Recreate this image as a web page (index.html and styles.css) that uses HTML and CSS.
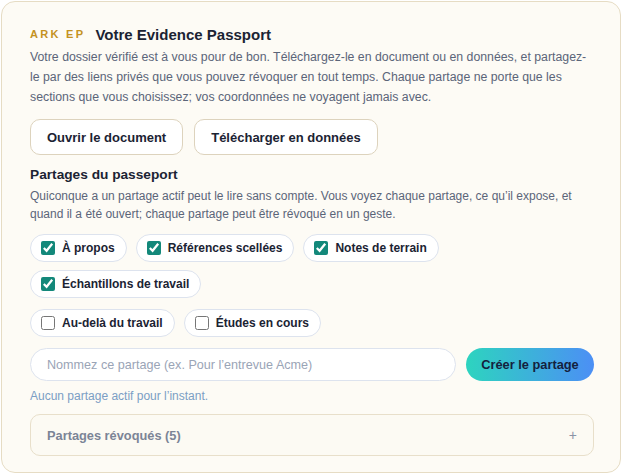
FILE: index.html
```html
<!DOCTYPE html>
<html lang="fr">
<head>
<meta charset="utf-8">
<link rel="stylesheet" href="styles.css">
</head>
<body>
<section class="card">
  <header class="head">
    <span class="eyebrow">ARK EP</span>
    <h1 class="title">Votre Evidence Passport</h1>
  </header>
  <p class="lead">Votre dossier vérifié est à vous pour de bon. Téléchargez-le en document ou en données, et partagez-le par des liens privés que vous pouvez révoquer en tout temps. Chaque partage ne porte que les sections que vous choisissez; vos coordonnées ne voyagent jamais avec.</p>
  <div class="actions">
    <button class="btn">Ouvrir le document</button>
    <button class="btn">Télécharger en données</button>
  </div>
  <h2 class="subtitle">Partages du passeport</h2>
  <p class="desc">Quiconque a un partage actif peut le lire sans compte. Vous voyez chaque partage, ce qu’il expose, et quand il a été ouvert; chaque partage peut être révoqué en un geste.</p>
  <div class="chips">
    <label class="chip"><input type="checkbox" checked><span>À propos</span></label>
    <label class="chip"><input type="checkbox" checked><span>Références scellées</span></label>
    <label class="chip"><input type="checkbox" checked><span>Notes de terrain</span></label>
    <label class="chip"><input type="checkbox" checked><span>Échantillons de travail</span></label>
  </div>
  <div class="chips chips-extra">
    <label class="chip"><input type="checkbox"><span>Au-delà du travail</span></label>
    <label class="chip"><input type="checkbox"><span>Études en cours</span></label>
  </div>
  <div class="create">
    <input class="name" type="text" placeholder="Nommez ce partage (ex. Pour l’entrevue Acme)">
    <button class="primary">Créer le partage</button>
  </div>
  <p class="empty">Aucun partage actif pour l’instant.</p>
  <div class="revoked">
    <span>Partages révoqués (5)</span>
    <span class="plus">+</span>
  </div>
</section>
</body>
</html>
```
FILE: styles.css
```css
* { box-sizing: border-box; }
body {
  margin: 0;
  background: #ffffff;
  font-family: "Liberation Sans", Arial, sans-serif;
  color: #1b2333;
}
.card {
  margin: 1px 0 0 1px;
  width: 620px;
  background: #fdfbf5;
  border: 1px solid #e6dcc4;
  border-radius: 14px;
  padding: 22px 26px 16px 28px;
}
.head {
  display: flex;
  align-items: center;
  gap: 10px;
  height: 20px;
}
.eyebrow {
  font-size: 11px;
  font-weight: 700;
  letter-spacing: 2.3px;
  color: #c4921f;
}
.title {
  margin: 0;
  font-size: 15px;
  font-weight: 700;
  color: #1b2333;
}
.lead {
  margin: 3px 0 0;
  font-size: 12.3px;
  line-height: 20px;
  color: #5b6579;
}
.actions {
  display: flex;
  gap: 11px;
  margin-top: 12px;
}
.btn {
  height: 36px;
  padding: 0 16px;
  background: #ffffff;
  border: 1px solid #ddd3bd;
  border-radius: 10px;
  font-family: inherit;
  font-size: 13px;
  font-weight: 700;
  color: #1b2333;
}
.subtitle {
  margin: 11px 0 0;
  font-size: 13.7px;
  line-height: 18px;
  font-weight: 700;
  color: #1b2333;
}
.desc {
  margin: 3px 0 0;
  font-size: 12px;
  line-height: 18px;
  color: #5b6579;
}
.chips {
  display: flex;
  flex-wrap: wrap;
  gap: 8px 9px;
  margin-top: 11px;
}
.chips-extra { margin-top: 11px; }
.chip {
  display: flex;
  align-items: center;
  gap: 7px;
  height: 28px;
  padding: 0 11px 0 10px;
  background: #ffffff;
  border: 1px solid #dde3ee;
  border-radius: 14px;
  font-size: 12px;
  font-weight: 700;
  color: #1b2333;
}
.chip input {
  margin: 0;
  width: 14px;
  height: 14px;
  accent-color: #13887a;
}
.create {
  display: flex;
  gap: 10px;
  margin-top: 11px;
}
.name {
  flex: 1;
  height: 33px;
  padding: 0 16px;
  border: 1px solid #dde3ee;
  border-radius: 17px;
  background: #ffffff;
  font-family: inherit;
  font-size: 12.6px;
  color: #1b2333;
}
.name::placeholder { color: #9aa4b6; }
.primary {
  width: 128px;
  height: 33px;
  border: 0;
  border-radius: 17px;
  background: linear-gradient(90deg, #2dd4bf, #4c8ff5);
  font-family: inherit;
  font-size: 12.8px;
  font-weight: 700;
  color: #14213d;
}
.empty {
  margin: 6px 0 0;
  font-size: 12px;
  line-height: 18px;
  color: #7b9ec4;
}
.revoked {
  display: flex;
  justify-content: space-between;
  align-items: center;
  height: 42px;
  margin-top: 9px;
  padding: 0 16px;
  border: 1px solid #e8dfca;
  border-radius: 10px;
  background: #fcfaf3;
  font-size: 12.8px;
  font-weight: 700;
  color: #7b8496;
}
.plus {
  font-weight: 400;
  font-size: 14px;
  color: #8a93a5;
}
```
